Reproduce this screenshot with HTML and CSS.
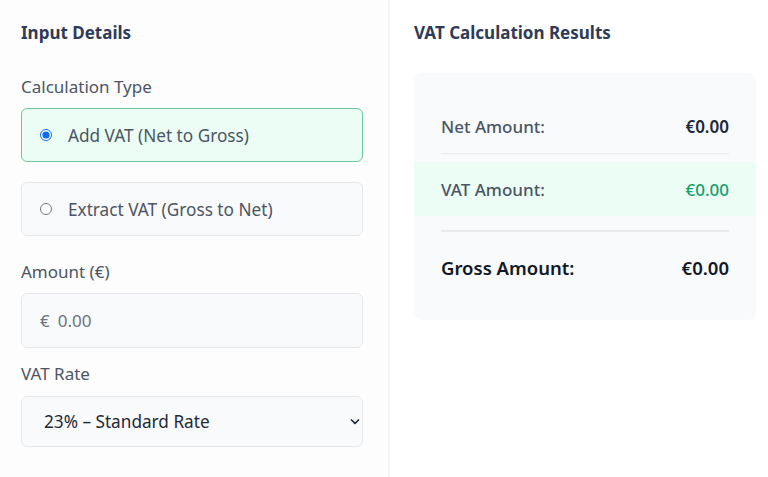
FILE: index.html
```html
<!DOCTYPE html>
<html lang="en">
<head>
<meta charset="utf-8">
<title>VAT Calculator</title>
<link rel="stylesheet" href="styles.css">
</head>
<body>
<div class="layout">
  <section class="panel panel-input">
    <h2 class="panel-title">Input Details</h2>
    <div class="field-label label-type">Calculation Type</div>
    <label class="option option-selected">
      <input type="radio" name="mode" class="radio" checked>
      <span class="option-text">Add VAT (Net to Gross)</span>
    </label>
    <label class="option option-second">
      <input type="radio" name="mode" class="radio">
      <span class="option-text">Extract VAT (Gross to Net)</span>
    </label>
    <div class="field-label label-amount">Amount (€)</div>
    <div class="amount-box">
      <span class="currency">€</span>
      <input class="amount-input" type="text" placeholder="0.00">
    </div>
    <div class="field-label label-rate">VAT Rate</div>
    <div class="select-wrap">
      <select class="rate-select">
        <option>23% – Standard Rate</option>
        <option>13.5% – Reduced Rate</option>
        <option>9% – Second Reduced Rate</option>
        <option>0% – Zero Rate</option>
      </select>
      <svg class="chevron" width="12" height="8" viewBox="0 0 12 8"><path d="M2.5 2l3.5 3.5 3.5-3.5" fill="none" stroke="#1f2937" stroke-width="1.7" stroke-linecap="round" stroke-linejoin="round"/></svg>
    </div>
  </section>
  <section class="panel panel-results">
    <h2 class="panel-title">VAT Calculation Results</h2>
    <div class="card">
      <div class="row row-net">
        <span class="row-label">Net Amount:</span>
        <span class="row-value">€0.00</span>
      </div>
      <div class="row row-vat">
        <span class="row-label">VAT Amount:</span>
        <span class="row-value value-green">€0.00</span>
      </div>
      <div class="separator"></div>
      <div class="row row-gross">
        <span class="row-label">Gross Amount:</span>
        <span class="row-value">€0.00</span>
      </div>
    </div>
  </section>
</div>
</body>
</html>
```

FILE: styles.css
```css
* { box-sizing: border-box; }
html, body {
  margin: 0;
  padding: 0;
  background: #ffffff;
  font-family: "Noto Sans", "Open Sans", "Liberation Sans", sans-serif;
  color: #4b5563;
}
.layout {
  display: flex;
  width: 768px;
  height: 477px;
  overflow: hidden;
}
.panel {
  padding-top: 21px;
}
.panel-input {
  width: 390px;
  padding-left: 21px;
  padding-right: 25px;
  background: #fdfdfd;
  border-right: 2px solid #f3f3f4;
}
.panel-results {
  width: 378px;
  padding-left: 24px;
  background: #ffffff;
}
.panel-title {
  margin: 0;
  font-size: 17px;
  line-height: 24px;
  font-weight: 700;
  color: #2d3b58;
}
.field-label {
  font-size: 17px;
  line-height: 24px;
  color: #4b5563;
}
.label-type { margin-top: 30px; }
.label-amount { margin-top: 24px; }
.label-rate { margin-top: 14px; }

.option {
  display: flex;
  align-items: center;
  height: 54px;
  padding-left: 17px;
  border: 1px solid #e5e7eb;
  border-radius: 6px;
  background: #f9fafb;
  cursor: pointer;
}
.option-selected {
  margin-top: 9px;
  background: #ecfdf5;
  border-color: #6cc99d;
}
.option-second { margin-top: 20px; }
.radio {
  width: 12px;
  height: 12px;
  margin: 0 16px 0 1px;
  accent-color: #0b6cf0;
}
.option-text {
  font-size: 17.2px;
  color: #4b5563;
}

.amount-box {
  display: flex;
  align-items: center;
  margin-top: 9px;
  height: 55px;
  padding-left: 18px;
  border: 1px solid #e5e7eb;
  border-radius: 6px;
  background: #f9fafb;
}
.currency {
  font-size: 17px;
  color: #6b7280;
  margin-right: 8px;
}
.amount-input {
  flex: 1;
  border: none;
  outline: none;
  background: transparent;
  font-family: inherit;
  font-size: 17px;
  color: #1f2937;
  padding: 0;
}
.amount-input::placeholder { color: #6b7280; }

.select-wrap {
  position: relative;
  margin-top: 10px;
}
.rate-select {
  display: block;
  width: 100%;
  height: 51px;
  padding-left: 22px;
  border: 1px solid #e5e7eb;
  border-radius: 6px;
  background: #f9fafb;
  font-family: inherit;
  font-size: 17.2px;
  color: #1f2937;
  -webkit-appearance: none;
  appearance: none;
}
.chevron {
  position: absolute;
  right: 2px;
  top: 22px;
}

.card {
  margin-top: 28px;
  width: 342px;
  padding: 27px 0 26px;
  background: #f8fafc;
  border-radius: 8px;
}
.row {
  display: flex;
  justify-content: space-between;
  align-items: center;
  height: 54px;
  font-size: 17px;
}
.row-net {
  margin: 0 27px;
  border-bottom: 1px solid #e9ebef;
}
.row-vat {
  margin-top: 8px;
  padding: 0 27px;
  background: #ecfdf5;
}
.separator {
  margin: 14px 27px 0;
  height: 2px;
  background: #e8eaee;
}
.row-gross {
  margin: 8px 27px 0;
  font-size: 18.5px;
}
.row-label {
  font-weight: 500;
  color: #4b5563;
}
.row-value {
  font-weight: 600;
  color: #1f2937;
}
.value-green {
  color: #16a06a;
  font-weight: 500;
}
.row-gross .row-label,
.row-gross .row-value {
  font-weight: 600;
  color: #111827;
}
```
